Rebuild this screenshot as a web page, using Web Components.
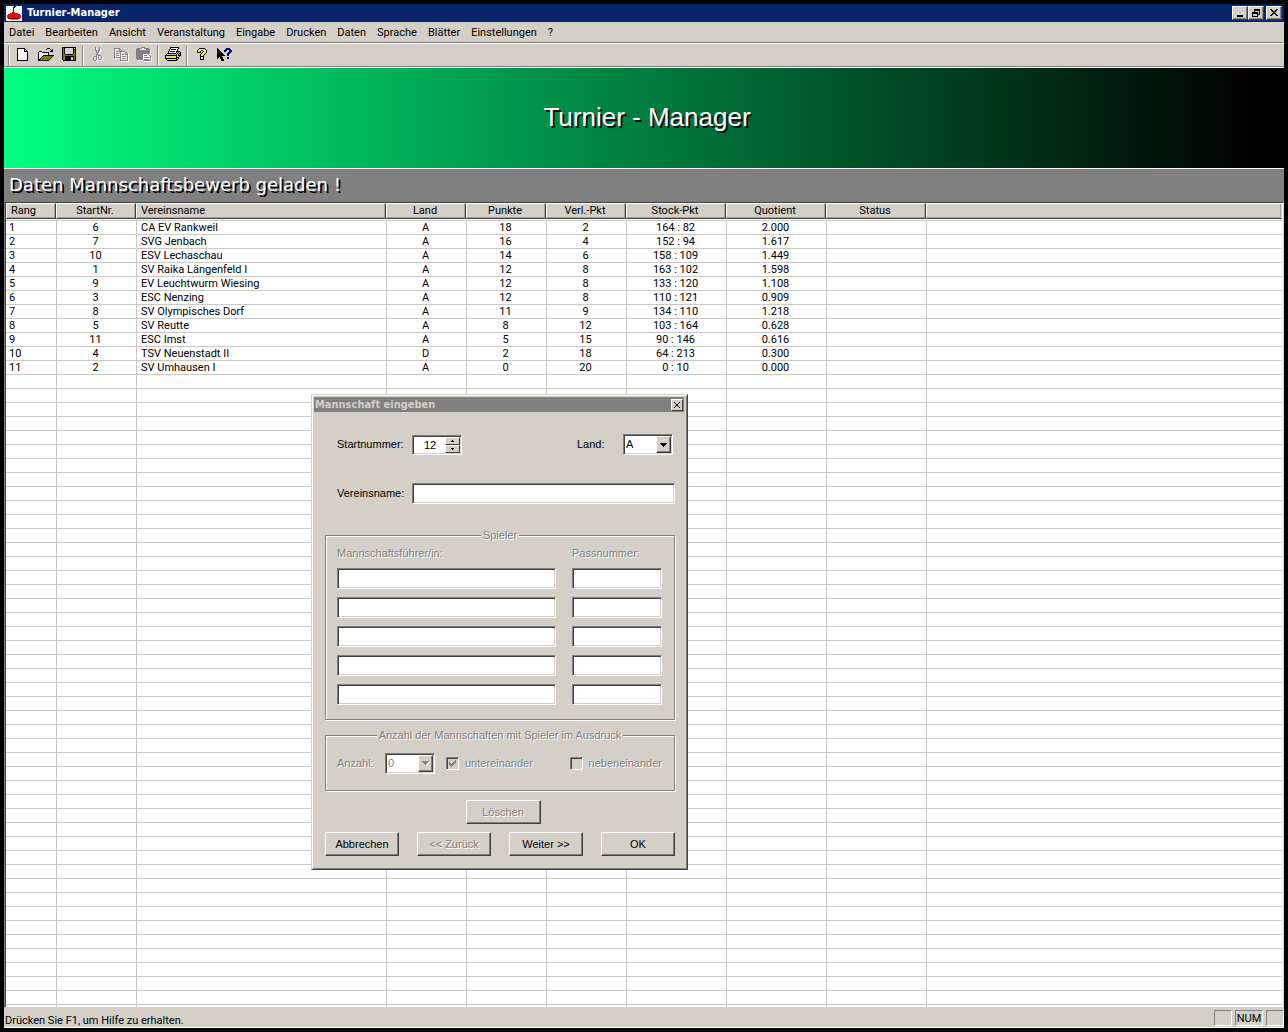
<!DOCTYPE html>
<html lang="de">
<head>
<meta charset="utf-8">
<title>Turnier-Manager</title>
<style>
  html, body { height: 100%; margin: 0; }
  body {
    --face: #d4d0c8;
    --shade: #808080;
    --dark: #404040;
    --line: #c9c9c5;
    --ui: Roboto, "Liberation Sans", sans-serif;
    --caption: "DejaVu Sans Condensed", "DejaVu Sans", sans-serif;
    background: #000;
    color: #000;
    font: 11px/13px var(--ui);
  }
</style>
</head>
<body>
<tm-app></tm-app>

<script>
const define = (name, html, setup) => {
  const template = document.createElement('template');
  template.innerHTML = html;
  customElements.define(name, class extends HTMLElement {
    connectedCallback() {
      if (this.shadowRoot) return;
      this.attachShadow({ mode: 'open' }).append(template.content.cloneNode(true));
      if (setup) setup(this, this.shadowRoot);
    }
  });
};

/* Pixel icons: one character is one pixel */
const COLORS = { '#': '#000', w: '#fff', g: '#d4d0c8', o: '#808000', y: '#ff0', n: '#000080', x: '#808080', r: '#e01010', m: '#801010' };
const ICONS = {
  fresh: [
    '########...', '#wwwwww##..', '#wwwwww#w#.', '#wwwwww####', '#wwwwwwwww#', '#wwwwwwwww#', '#wwwwwwwww#',
    '#wwwwwwwww#', '#wwwwwwwww#', '#wwwwwwwww#', '#wwwwwwwww#', '#wwwwwwwww#', '###########'],
  open: [
    '.........###....', '........#...#.#.', '.............##.', '.###........###.', '#ywy#######.....', '#wywywywyw#.....',
    '#ywywywywy#.....', '#wywy###########', '#ywy#ooooooooo#.', '#wy#ooooooooo#..', '#y#ooooooooo#...', '##ooooooooo#....',
    '###########.....'],
  save: [
    '##############', '#o#gggggggg#g#', '#o#gggggggg###', '#o#gggggggg#o#', '#o#gggggggg#o#', '#o#gggggggg#o#', '#o#gggggggg#o#',
    '#oo########oo#', '#oooooooooooo#', '#oo#########o#', '#oo######gg#o#', '#oo######gg#o#', '#oo######gg#o#', '.#############'],
  cut: [
    '..x...x..', '..x...x..', '..x...x..', '..xx.xx..', '...x.x...', '...xxx...', '....x....', '...xxx...',
    '...x.xxx.', '.xxx.x..x', 'x..x.x..x', 'x..x.x..x', 'x..x..xx.', '.xx......'],
  copy: [
    'xxxxxx........', 'x....xx.......', 'x....x.x......', 'x.xx.xxxxxx...', 'x.....x....xx.', 'x.xxx.x....x.x', 'x.....x.xx.xxx',
    'x.xxx.x......x', 'x.....x.xxxx.x', 'xxxxxxx......x', '......x.xxxx.x', '......x......x', '......xxxxxxxx'],
  paste: [
    '.....xxxx......', '.xxxxx..xxxxx..', 'xxxxwwwwwwxxxx.', 'xxxxxxxxxxxxxx.', 'xxxxxxxxxxxxxx.', 'xxxxxxxxxxxxxx.', 'xxxxxxxxxxxxxx.',
    'xxxxxxxwwwwwx..', 'xxxxxxxwxxxwwx.', 'xxxxxxxwwwwwwwx', 'xxxxxxxwxxxxxwx', 'xxxxxxxwwwwwwwx', '.xxxxxxwxxxxxwx', '.......xxxxxxxx'],
  print: [
    '.....#########..', '.....#wwwwwww#..', '....#w#####w#...', '....#wwwwwww#...', '...#w#####w####.', '...#wwwwwww#g#g#',
    '..#########g#g##', '.#ggggggggg#g#g#', '############g###', '#ggggggyyyg#gg#.', '#gggggggggg###..', '############g#..',
    '.#ggggggggg##...', '..##########....'],
  help: [
    '..######..', '.#yyyyyy#.', '#yyy##yyy#', '#yy#..#yy#', '####.#yyy#', '....#yyy#.', '...#yyy#..', '...#yy#...', '...####...',
    '...#yy#...', '...#yy#...', '...####...'],
  what: [
    '#........nnnn..', '##......nnnnnn.', '###....nnn..nnn', '####...nn...nnn', '#####......nnn.', '######....nnn..', '#######...nn...',
    '########..nn...', '#####..........', '##.###....nn...', '#..###....nn...', '....###........', '....###........'],
  app: [
    'wwwwwwww##wwwwww', 'wwwwwww##wwwwwww', 'wwwwwww#wwwwwwww', 'wwwwwww#wwwwwwww', 'wwwwwww#wwwwwwww', 'wwwwwwwrwwwwwwww',
    'wwwwwwrrrwwwwwww', 'wwwwrrrrrrrrwwww', 'wwrrrrrrrrrrrrww', 'wrrrrrrrrrrrrrrw', 'wrrrrrrrrrrrrrrw', 'wrrrrrrrrrrrrrrw',
    'wwmmmmmmmmmmmmww', 'wwwwxxxxxxxxwwww', 'wwwwwwwwwwwwwwww'],
  min: ['........', '........', '........', '........', '........', '........', '.######.', '.######.'],
  restore: ['..######', '..######', '..#....#', '######.#', '######.#', '#....###', '#....#..', '######..'],
  close: ['##....##', '.##..##.', '..####..', '...##...', '..####..', '.##..##.', '##....##'],
  closeSmall: ['#....#', '.#..#.', '..##..', '..##..', '.#..#.', '#....#'],
  down: ['#######', '.#####.', '..###..', '...#...'],
  downOff: ['xxxxxxx', '.xxxxx.', '..xxx..', '...x...'],
  up3: ['.#.', '###'],
  down3: ['###', '.#.'],
  check: ['......x', '.....xx', 'x...xxx', 'xx.xxx.', 'xxxxx..', '.xxx...', '..x....']
};
define('tm-icon', `
  <style>:host { display: block; flex: none; } svg { display: block; overflow: visible; }</style>`, (el, root) => {
  const map = ICONS[el.getAttribute('name')];
  const paint = (dx, dy, only) => map.map((row, y) => [...row].map((c, x) =>
    c === '.' || (only && c === 'w') ? '' : `<rect x="${x + dx}" y="${y + dy}" width="1" height="1" fill="${only || COLORS[c]}"/>`).join('')).join('');
  const under = el.hasAttribute('embossed') ? paint(1, 1, '#fff') : '';
  const box = document.createElement('div');
  box.innerHTML = `<svg width="${map[0].length}" height="${map.length}" shape-rendering="crispEdges" aria-hidden="true">${under}${paint(0, 0)}</svg>`;
  root.append(box.firstChild);
});

const RAISED = `
  border: 1px solid; border-color: #fff var(--dark) var(--dark) #fff;
  box-shadow: inset -1px -1px var(--shade); background: var(--face);`;
const SUNKEN = `
  border: 1px solid; border-color: var(--shade) #fff #fff var(--shade);
  box-shadow: inset 1px 1px var(--dark), inset -1px -1px var(--face);`;

define('tm-titlebar', `
  <style>
    :host { display: flex; align-items: center; height: 18px; padding: 0 2px; background: #0a246a; color: #fff; }
    h1 { flex: 1; margin: 0 0 0 5px; font: bold 11px/14px var(--caption); }
    button { display: grid; place-items: center; box-sizing: border-box; width: 16px; height: 14px; padding: 0 1px 1px 0; ${RAISED} }
    button:last-child { margin-left: 2px; }
  </style>
  <tm-icon name="app"></tm-icon>
  <h1><slot></slot></h1>
  <button aria-label="Minimieren"><tm-icon name="min"></tm-icon></button>
  <button aria-label="Wiederherstellen"><tm-icon name="restore"></tm-icon></button>
  <button aria-label="Schließen"><tm-icon name="close"></tm-icon></button>`);

define('tm-menu', `
  <style>
    :host { display: block; background: var(--face); border-bottom: 1px solid var(--shade); }
    nav { display: flex; height: 20px; }
    button { border: 0; background: none; font: inherit; padding: 0 6px 0 5px; color: inherit; }
  </style>
  <nav></nav>`, (el, root) => {
  for (const label of el.getAttribute('items').split(',')) {
    const b = document.createElement('button');
    b.textContent = label;
    root.querySelector('nav').append(b);
  }
});

define('tm-toolbar', `
  <style>
    :host { display: flex; align-items: center; height: 22px; padding-left: 4px; background: var(--face);
      border-top: 1px solid #fff; border-bottom: 1px solid var(--shade); }
    i { width: 1px; height: 20px; background: var(--shade); border-right: 1px solid #fff; margin: 0 2px; }
    i.grip { margin: 0 1px 0 0; }
    button { display: grid; place-items: center; box-sizing: border-box; width: 23px; height: 22px; border: 0; padding: 0 0 2px; background: none; }
  </style>
  <i class="grip"></i>
  <button aria-label="Neu"><tm-icon name="fresh"></tm-icon></button>
  <button aria-label="Öffnen"><tm-icon name="open"></tm-icon></button>
  <button aria-label="Speichern"><tm-icon name="save"></tm-icon></button>
  <i></i>
  <button aria-label="Ausschneiden" disabled><tm-icon name="cut" embossed></tm-icon></button>
  <button aria-label="Kopieren" disabled><tm-icon name="copy" embossed></tm-icon></button>
  <button aria-label="Einfügen" disabled><tm-icon name="paste" embossed></tm-icon></button>
  <i></i>
  <button aria-label="Drucken"><tm-icon name="print"></tm-icon></button>
  <i></i>
  <button aria-label="Info"><tm-icon name="help"></tm-icon></button>
  <button aria-label="Direkthilfe"><tm-icon name="what"></tm-icon></button>`);

define('tm-banner', `
  <style>
    :host { display: grid; place-items: center; box-sizing: border-box; height: 102px; padding: 0 0 2px 6px; border-top: 1px solid #fff; border-bottom: 1px solid #fff;
      background: linear-gradient(90deg, #00ff80, #000 98%); color: #fff; }
    h2 { margin: 0; font: 26px/30px "Liberation Sans", sans-serif; text-shadow: 2px 2px #111; }
  </style>
  <h2><slot></slot></h2>`);

define('tm-notice', `
  <style>
    :host { display: block; padding: 4px 5px 5px; background: var(--shade); color: #fff;
      font: 18px/24px "DejaVu Sans", sans-serif; text-shadow: 2px 2px #000; }
  </style>
  <slot></slot>`);

const TEAMS = [
  [1, 6, 'CA EV Rankweil', 'A', 18, 2, '164 : 82', '2.000'],
  [2, 7, 'SVG Jenbach', 'A', 16, 4, '152 : 94', '1.617'],
  [3, 10, 'ESV Lechaschau', 'A', 14, 6, '158 : 109', '1.449'],
  [4, 1, 'SV Raika Längenfeld I', 'A', 12, 8, '163 : 102', '1.598'],
  [5, 9, 'EV Leuchtwurm Wiesing', 'A', 12, 8, '133 : 120', '1.108'],
  [6, 3, 'ESC Nenzing', 'A', 12, 8, '110 : 121', '0.909'],
  [7, 8, 'SV Olympisches Dorf', 'A', 11, 9, '134 : 110', '1.218'],
  [8, 5, 'SV Reutte', 'A', 8, 12, '103 : 164', '0.628'],
  [9, 11, 'ESC Imst', 'A', 5, 15, '90 : 146', '0.616'],
  [10, 4, 'TSV Neuenstadt II', 'D', 2, 18, '64 : 213', '0.300'],
  [11, 2, 'SV Umhausen I', 'A', 0, 20, '0 : 10', '0.000']
];
define('tm-ranking', `
  <style>
    :host { display: block; overflow: hidden; background: #fff; border: 1px solid var(--shade);
      border-color: var(--dark) var(--face) var(--face) var(--shade); box-shadow: inset 1px 0 var(--dark); padding: 0 1px; }
    table { width: 100%; table-layout: fixed; border-spacing: 0; }
    th, td { box-sizing: border-box; padding: 0 2px 0 0; text-align: center; font-weight: normal; white-space: nowrap; }
    th { height: 16px; background: var(--face); border: 1px solid; border-color: #fff var(--dark) var(--dark) #fff; line-height: 14px;
      box-shadow: inset -1px -1px #a8a49c; }
    td { height: 14px; border-bottom: 1px solid var(--line); border-left: 1px solid var(--line); line-height: 13px; }
    .lead td { height: 2px; line-height: 0; }
    td:first-child { border-left: 0; padding-left: 3px; text-align: left; }
    th:first-child, th:nth-child(3), td:nth-child(3) { padding-left: 4px; text-align: left; }
    th:last-child { border-right-color: var(--face); }
    .s { width: 50px; } .m { width: 80px; } .l { width: 100px; } .n { width: 250px; }
  </style>
  <table>
    <colgroup><col class="s"><col class="m"><col class="n"><col class="m"><col class="m"><col class="m"><col class="l"><col class="l"><col class="l"><col></colgroup>
    <thead><tr><th>Rang</th><th>StartNr.</th><th>Vereinsname</th><th>Land</th><th>Punkte</th><th>Verl.-Pkt</th><th>Stock-Pkt</th><th>Quotient</th><th>Status</th><th></th></tr></thead>
    <tbody></tbody>
  </table>`, (el, root) => {
  const row = (cells, cls = '') => `<tr class="${cls}">` + Array.from({ length: 10 }, (_, i) => `<td>${cells[i] ?? ''}</td>`).join('') + '</tr>';
  root.querySelector('tbody').innerHTML = row([], 'lead') + TEAMS.map(t => row(t)).join('') + row([]).repeat(120);
});

define('tm-statusbar', `
  <style>
    :host { display: flex; align-items: center; gap: 3px; height: 18px; padding: 1px 0 0 1px; background: var(--face); border-bottom: 1px solid #fff; }
    p { flex: 1; margin: 4px 0 0; }
    span { box-sizing: border-box; width: 18px; height: 16px; border: 1px solid; border-color: var(--shade) #fff #fff var(--shade); line-height: 16px; text-align: center; }
    .num { width: 28px; }
  </style>
  <p><slot></slot></p><span></span><span class="num">NUM</span><span></span>`);

define('team-dialog', `
  <style>
    :host { display: block; box-sizing: border-box; width: 377px; padding: 2px 3px 13px 2px; background: var(--face);
      border: 1px solid; border-color: var(--face) var(--dark) var(--dark) var(--face);
      box-shadow: inset 1px 1px #fff, inset -1px -1px var(--shade);
      font: 11px/13px "Liberation Sans", sans-serif; }
    header { display: flex; align-items: center; justify-content: space-between; height: 15px; padding: 0 1px; background: var(--shade); color: var(--face); }
    h2 { margin: 0; font: bold 11px/15px var(--caption); }
    button { display: grid; place-items: center; box-sizing: border-box; padding: 0; font: inherit; color: #000; ${RAISED} }
    button:disabled { color: var(--shade); text-shadow: 1px 1px #fff; }
    header button { width: 12px; height: 12px; box-shadow: none; }
    form { display: flex; flex-direction: column; padding: 22px 9px 0 11px; }
    input, select { box-sizing: border-box; height: 21px; margin: 0; padding: 0 3px; border-radius: 0; background: #fff; color: #000; font: inherit; outline: 0; ${SUNKEN} }
    .line { display: flex; align-items: center; padding-left: 12px; }
    .top { padding-right: 2px; }
    .line > label:first-child { width: 75px; }
    .combo, .spin { display: grid; grid-template-columns: 33px 15px 2px; width: 50px; height: 21px; align-items: center; }
    .combo > select { grid-area: 1 / 1 / 2 / 4; appearance: none; width: 50px; padding: 0 0 0 2px; }
    .combo > i { grid-area: 1 / 2; display: grid; place-items: center; box-sizing: border-box; height: 17px; pointer-events: none; ${RAISED} }
    .spin > input { grid-area: 1 / 1 / 2 / 4; appearance: textfield; width: 50px; padding: 0 14px 0 0; text-align: center; }
    .spin > input::-webkit-inner-spin-button { display: none; }
    .spin > div { grid-area: 1 / 2; display: grid; }
    .spin button { height: 8px; box-shadow: none; }
    .spin, .spin > input { height: 20px; }
    .land { width: 46px; margin-left: auto; }
    .name { margin: 28px 0 25px; }
    .name input { flex: 1; }
    fieldset { min-width: 0; margin: 0; padding: 0; border: 1px solid var(--shade); box-shadow: 1px 1px #fff, inset 1px 1px #fff; color: var(--shade); text-shadow: 1px 1px #fff; }
    .second { margin-top: 9px; }
    legend { margin: 0 auto; padding: 0 2px; background: var(--face); }
    .players { display: grid; grid-template-columns: 219px 90px; gap: 8px 16px; padding: 5px 11px 14px; }
    .print { display: flex; align-items: center; height: 48px; box-sizing: border-box; padding: 0 12px 6px 11px; }
    .print > label:first-of-type { width: 48px; }
    .print .combo select { color: var(--shade); opacity: 1; text-shadow: none; }
    .tick { display: flex; align-items: center; gap: 6px; }
    .tick span { display: grid; }
    .tick span > * { grid-area: 1 / 1; place-self: center; pointer-events: none; }
    .tick input { appearance: none; width: 13px; height: 13px; padding: 0; background: var(--face); }
    .print .combo + .tick { margin: 0 auto 0 11px; }
    .delete { align-self: center; margin: 9px 0 8px 6px; }
    form > button, footer button { width: 75px; height: 24px; }
    footer { display: flex; gap: 18px; }
    footer button:last-child { margin-left: auto; }
  </style>
  <header><h2>Mannschaft eingeben</h2><button aria-label="Schließen"><tm-icon name="closeSmall"></tm-icon></button></header>
  <form>
    <div class="line top">
      <label for="start">Startnummer:</label>
      <div class="spin"><input id="start" type="number" value="12">
        <div><button type="button" aria-label="Mehr"><tm-icon name="up3"></tm-icon></button><button type="button" aria-label="Weniger"><tm-icon name="down3"></tm-icon></button></div></div>
      <label class="land" for="land">Land:</label>
      <div class="combo"><select id="land"><option>A</option><option>D</option></select><i><tm-icon name="down"></tm-icon></i></div>
    </div>
    <div class="line name"><label for="club">Vereinsname:</label><input id="club" type="text"></div>
    <fieldset disabled>
      <legend>Spieler</legend>
      <div class="players">
        <label for="p1">Mannschaftsführer/in:</label><label for="n1">Passnummer:</label>
      </div>
    </fieldset>
    <fieldset class="second" disabled>
      <legend>Anzahl der Mannschaften mit Spieler im Ausdruck</legend>
      <div class="print">
        <label for="count">Anzahl:</label>
        <div class="combo"><select id="count"><option>0</option></select><i><tm-icon name="downOff" embossed></tm-icon></i></div>
        <label class="tick"><span><input type="checkbox" checked><tm-icon name="check"></tm-icon></span>untereinander</label>
        <label class="tick"><span><input type="checkbox"></span>nebeneinander</label>
      </div>
    </fieldset>
    <button class="delete" type="button" disabled>Löschen</button>
    <footer><button type="button">Abbrechen</button><button type="button" disabled>&lt;&lt; Zurück</button><button type="button">Weiter &gt;&gt;</button><button type="button">OK</button></footer>
  </form>`, (el, root) => {
  const grid = root.querySelector('.players');
  for (let i = 1; i <= 5; i++) {
    for (const [key, title] of [['p', 'Spieler'], ['n', 'Passnummer']]) {
      const field = document.createElement('input');
      field.type = 'text';
      field.id = key + i;
      field.setAttribute('aria-label', `${title} ${i}`);
      grid.append(field);
    }
  }
});

define('tm-app', `
  <style>
    :host { display: flex; flex-direction: column; box-sizing: border-box; height: 100vh; padding: 4px; }
    tm-ranking { flex: 1; min-height: 0; }
    team-dialog { position: absolute; left: 311px; top: 394px; }
  </style>
  <tm-titlebar>Turnier-Manager</tm-titlebar>
  <tm-menu items="Datei,Bearbeiten,Ansicht,Veranstaltung,Eingabe,Drucken,Daten,Sprache,Blätter,Einstellungen,?"></tm-menu>
  <tm-toolbar></tm-toolbar>
  <tm-banner>Turnier - Manager</tm-banner>
  <tm-notice>Daten Mannschaftsbewerb geladen !</tm-notice>
  <tm-ranking></tm-ranking>
  <tm-statusbar>Drücken Sie F1, um Hilfe zu erhalten.</tm-statusbar>
  <team-dialog></team-dialog>`);
</script>
</body>
</html>
